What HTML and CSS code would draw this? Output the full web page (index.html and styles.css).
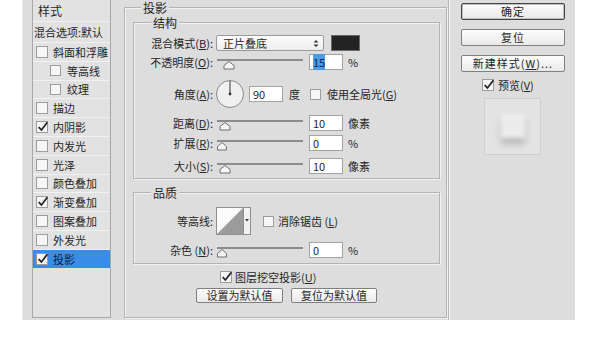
FILE: index.html
```html
<!DOCTYPE html>
<html>
  <head>
    <meta charset="utf-8" />
    <title>图层样式</title>
    <link rel="stylesheet" href="styles.css">
  </head>
  <body>
    <div class="dialog">
      <!-- 左侧样式列表 -->
      <div class="side">
        <div class="list">
          <div class="list-head">样式</div>
          <div class="list-row blend">混合选项:默认</div>
          <div class="list-row"><span class="cb"></span>斜面和浮雕</div>
          <div class="list-row sub"><span class="cb"></span>等高线</div>
          <div class="list-row sub"><span class="cb"></span>纹理</div>
          <div class="list-row"><span class="cb"></span>描边</div>
          <div class="list-row"><span class="cb"><svg viewBox="0 0 12 12"><path d="M2.5 6.5 L5 9.2 L10.5 2" /></svg></span>内阴影</div>
          <div class="list-row"><span class="cb"></span>内发光</div>
          <div class="list-row"><span class="cb"></span>光泽</div>
          <div class="list-row"><span class="cb"></span>颜色叠加</div>
          <div class="list-row"><span class="cb"><svg viewBox="0 0 12 12"><path d="M2.5 6.5 L5 9.2 L10.5 2" /></svg></span>渐变叠加</div>
          <div class="list-row"><span class="cb"></span>图案叠加</div>
          <div class="list-row"><span class="cb"></span>外发光</div>
          <div class="list-row active"><span class="cb"><svg viewBox="0 0 12 12"><path d="M2.5 6.5 L5 9.2 L10.5 2" /></svg></span>投影</div>
        </div>
      </div>

      <!-- 中间设置 -->
      <div class="main">
        <div class="group outer">
          <div class="legend">投影</div>

          <div class="group inner struct">
            <div class="legend">结构</div>
            <div class="row r-blend">
              <span class="lbl">混合模式(<u>B</u>):</span>
              <div class="select">
                <span>正片叠底</span>
                <svg width="6" height="9" viewBox="0 0 6 9"><path d="M0.5 3.5 L3 1 L5.5 3.5 Z M0.5 5.5 L3 8 L5.5 5.5 Z" /></svg>
              </div>
              <span class="swatch"></span>
            </div>
            <div class="row r-opacity">
              <span class="lbl">不透明度(<u>O</u>):</span>
              <svg class="slider" width="86" height="18" viewBox="0 0 86 18"><rect x="0" y="6" width="86" height="2" /><path class="thumb" d="M7 16 V12.5 L12 8.5 L17 12.5 V16 Z" /></svg>
              <span class="field"><span class="sel">15</span></span>
              <span class="unit">%</span>
            </div>
            <div class="row r-angle">
              <span class="lbl">角度(<u>A</u>):</span>
              <svg class="dial" width="30" height="30" viewBox="0 0 30 30"><circle cx="15" cy="15" r="13.5" /><path d="M15 15 V2" /><circle class="dot" cx="15" cy="15" r="1.4" /></svg>
              <span class="field">90</span>
              <span class="unit deg">度</span>
              <span class="cb gl"></span>
              <span class="opt">使用全局光(<u>G</u>)</span>
            </div>
            <div class="row r-distance">
              <span class="lbl">距离(<u>D</u>):</span>
              <svg class="slider" width="86" height="18" viewBox="0 0 86 18"><rect x="0" y="6" width="86" height="2" /><path class="thumb" d="M3 16 V12.5 L8 8.5 L13 12.5 V16 Z" /></svg>
              <span class="field">10</span>
              <span class="unit">像素</span>
            </div>
            <div class="row r-spread">
              <span class="lbl">扩展(<u>R</u>):</span>
              <svg class="slider" width="86" height="18" viewBox="0 0 86 18"><rect x="0" y="6" width="86" height="2" /><path class="thumb" d="M0.5 16 V12.5 L5 8.5 L9.5 12.5 V16 Z" /></svg>
              <span class="field">0</span>
              <span class="unit">%</span>
            </div>
            <div class="row r-size">
              <span class="lbl">大小(<u>S</u>):</span>
              <svg class="slider" width="86" height="18" viewBox="0 0 86 18"><rect x="0" y="6" width="86" height="2" /><path class="thumb" d="M3 16 V12.5 L8 8.5 L13 12.5 V16 Z" /></svg>
              <span class="field">10</span>
              <span class="unit">像素</span>
            </div>
          </div>

          <div class="group inner quality">
            <div class="legend">品质</div>
            <div class="row r-contour">
              <span class="lbl">等高线:</span>
              <svg class="contour" width="35" height="28" viewBox="0 0 35 28">
                <rect class="box" x="0.5" y="0.5" width="27" height="27" />
                <path class="ramp" d="M1 27 L27 1 V27 Z" />
                <rect class="drop" x="27.5" y="0.5" width="7" height="27" />
                <path class="arrow" d="M29 12 H33 L31 14.5 Z" />
              </svg>
              <span class="cb aa"></span>
              <span class="opt">消除锯齿 (<u>L</u>)</span>
            </div>
            <div class="row r-noise">
              <span class="lbl">杂色 (<u>N</u>):</span>
              <svg class="slider" width="86" height="18" viewBox="0 0 86 18"><rect x="0" y="6" width="86" height="2" /><path class="thumb" d="M0.5 16 V12.5 L5 8.5 L9.5 12.5 V16 Z" /></svg>
              <span class="field">0</span>
              <span class="unit">%</span>
            </div>
          </div>

          <div class="knockout">
            <span class="cb"><svg viewBox="0 0 12 12"><path d="M2.5 6.5 L5 9.2 L10.5 2" /></svg></span>
            <span>图层挖空投影(<u>U</u>)</span>
          </div>
          <div class="defaults">
            <button class="btn">设置为默认值</button>
            <button class="btn">复位为默认值</button>
          </div>
        </div>
      </div>

      <!-- 右侧按钮 -->
      <div class="actions">
        <button class="btn big primary">确定</button>
        <button class="btn big">复位</button>
        <button class="btn big">新建样式(<u>W</u>)...</button>
        <div class="preview-toggle">
          <span class="cb"><svg viewBox="0 0 12 12"><path d="M2.5 6.5 L5 9.2 L10.5 2" /></svg></span>
          <span>预览(<u>V</u>)</span>
        </div>
        <div class="preview">
          <div class="blob"></div>
        </div>
      </div>
    </div>
  </body>
</html>
```

FILE: styles.css
```css
* {
  margin: 0;
  padding: 0;
  box-sizing: border-box;
}
body {
  background: #fff;
  font-family: "Noto Sans CJK SC", "Noto Sans", sans-serif;
  font-size: 11px;
  color: #262626;
}
u {
  text-decoration: underline;
  text-underline-offset: 1px;
}
.dialog {
  display: flex;
  width: 553px;
  height: 320px;
  margin-left: 22px;
  background: #dddddd;
  border-left: 1px solid #e9e9e9;
}

/* 左侧列表 */
.side {
  width: 99px;
  padding-left: 9px;
}
.list {
  width: 79px;
  height: 318px;
  background: #e2e2e2;
  border: 1px solid #a8a8a8;
  border-top: none;
}
.list-head {
  height: 21px;
  line-height: 21px;
  padding-left: 5px;
  font-size: 12px;
}
.list-row {
  height: 18.8px;
  display: flex;
  align-items: center;
  gap: 5px;
  padding-left: 3px;
  border-top: 1px solid #f1f1f1;
  white-space: nowrap;
  overflow: hidden;
}
.list-row.blend {
  height: 21px;
  padding-left: 1px;
}
.list-row.sub {
  padding-left: 17px;
  gap: 6px;
}
.list-row.sub .cb {
  width: 11px;
  height: 11px;
}
.list-row.active {
  background: #3a8de6;
  color: #0b1f44;
}

/* 复选框 */
.cb {
  display: inline-block;
  flex: none;
  width: 12px;
  height: 12px;
  background: #f6f6f6;
  border: 1px solid #9c9c9c;
  position: relative;
}
.cb svg {
  position: absolute;
  left: -1px;
  top: -2px;
  width: 13px;
  height: 13px;
}
.cb svg path {
  fill: none;
  stroke: #222;
  stroke-width: 1.6;
}

/* 中间区域 */
.main {
  width: 326px;
  padding-left: 2px;
  padding-top: 7px;
}
.group {
  border: 1px solid #b3b3b3;
  box-shadow: inset 1px 1px 0 #f2f2f2, 1px 1px 0 #f2f2f2;
}
.outer {
  width: 323px;
  height: 311px;
}
.legend {
  display: table;
  margin-top: -6px;
  margin-left: 16px;
  padding: 0 2px;
  line-height: 12px;
  font-size: 12px;
  background: #dddddd;
}
.inner {
  width: 307px;
  margin-left: 8px;
}
.inner .legend {
  margin-left: 17px;
}
.struct {
  margin-top: 8px;
  padding-bottom: 3px;
}
.quality {
  margin-top: 13px;
  padding-bottom: 4px;
}
.row {
  display: flex;
  align-items: center;
  height: 18px;
  white-space: nowrap;
}
.lbl {
  width: 79px;
  margin-right: 3px;
  text-align: right;
}
.r-blend { margin-top: 5px; }
.r-opacity { margin-top: 1px; }
.r-angle { margin-top: 8px; height: 30px; }
.r-distance { margin-top: 5px; }
.r-spread { margin-top: 2px; }
.r-size { margin-top: 5px; }
.r-contour { margin-top: 8px; height: 28px; }
.r-noise { margin-top: 6px; }

.select {
  width: 108px;
  height: 16px;
  display: flex;
  align-items: center;
  justify-content: space-between;
  padding: 0 4px 0 6px;
  background: linear-gradient(#fdfdfd, #ededed);
  border: 1px solid #9a9a9a;
  border-radius: 2px;
}
.select svg path {
  fill: #333;
}
.swatch {
  width: 29px;
  height: 16px;
  margin-left: 7px;
  background: #232323;
  border: 1px solid #6a6a6a;
}
.slider {
  margin-left: 1px;
}
.slider rect {
  fill: #8c8c8c;
}
.slider .thumb {
  fill: #f7f7f7;
  stroke: #6e6e6e;
  stroke-width: 1;
}
.field {
  width: 34px;
  height: 16px;
  margin-left: 6px;
  padding-left: 3px;
  line-height: 14px;
  background: #fff;
  border: 1px solid #a3a3a3;
}
.sel {
  background: #4d9be6;
  color: #0d2a5c;
}
.unit {
  margin-left: 5px;
}
.dial {
  margin-left: -1px;
}
.dial circle {
  fill: #f0f0f0;
  stroke: #8a8a8a;
}
.dial path {
  stroke: #333;
  stroke-width: 1;
}
.dial .dot {
  fill: #333;
  stroke: none;
}
.r-angle .field {
  margin-left: 4px;
}
.unit.deg {
  margin-left: 6px;
}
.cb.gl {
  width: 11px;
  height: 11px;
  margin-left: 10px;
}
.opt {
  margin-left: 6px;
}
.contour .box {
  fill: #fbfbfb;
  stroke: #8f8f8f;
}
.contour .ramp {
  fill: #9b9b9b;
}
.contour .drop {
  fill: #f2f2f2;
  stroke: #8f8f8f;
}
.contour .arrow {
  fill: #333;
}
.cb.aa {
  width: 11px;
  height: 11px;
  margin-left: 12px;
}
.r-contour .opt {
  margin-left: 4px;
}
.knockout {
  display: flex;
  align-items: center;
  gap: 3px;
  height: 16px;
  margin-top: 5px;
  padding-left: 95px;
}
.defaults {
  display: flex;
  gap: 8px;
  margin-top: 3px;
  padding-left: 71px;
}

/* 按钮 */
.btn {
  font-family: inherit;
  font-size: 11px;
  color: #262626;
  width: 87px;
  height: 15px;
  line-height: 13px;
  background: linear-gradient(#fdfdfd, #e9e9e9);
  border: 1px solid #7f7f7f;
  border-radius: 2px;
}
.defaults .btn + .btn {
  width: 86px;
}

/* 右侧 */
.actions {
  width: 126px;
  padding: 3px 0 0 12px;
  border-left: 1px solid #b9b9b9;
  box-shadow: inset 1px 0 0 #f1f1f1;
}
.btn.big {
  display: block;
  width: 104px;
  height: 17px;
  margin-bottom: 9px;
  letter-spacing: 1px;
}
.btn.primary {
  border-color: #444;
  box-shadow: inset 0 0 0 1px #bdbdbd;
}
.preview-toggle {
  display: flex;
  align-items: center;
  gap: 4px;
  height: 14px;
  margin-top: -3px;
  padding-left: 21px;
}
.preview {
  width: 57px;
  height: 57px;
  margin-top: 6px;
  margin-left: 23px;
  padding: 15px 0 0 16px;
  background: #e3e3e3;
  border: 1px solid #cfcfcf;
}
.blob {
  width: 24px;
  height: 24px;
  background: #ececec;
  box-shadow: 0 6px 6px rgba(0, 0, 0, 0.2);
  filter: blur(2px);
}
```
